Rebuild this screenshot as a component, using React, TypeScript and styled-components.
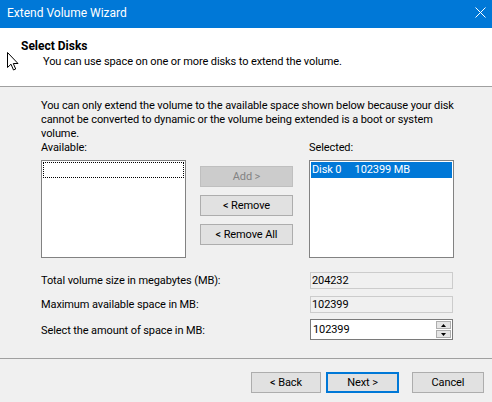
import styled, { createGlobalStyle } from 'styled-components';

const FONT = "Roboto, 'Liberation Sans', Arial, sans-serif";

const GlobalStyle = createGlobalStyle`
  html, body {
    margin: 0;
    padding: 0;
    background: #f0f0f0;
  }
  body {
    font-family: ${FONT};
    font-size: 11px;
    letter-spacing: -0.1px;
    color: #000;
  }
`;

const Window = styled.div`
  position: relative;
  width: 492px;
  height: 402px;
  display: flex;
  flex-direction: column;
  background: #f0f0f0;
  overflow: hidden;
`;

const TitleBar = styled.div`
  height: 28px;
  flex-shrink: 0;
  background: #0078d7;
  color: #fff;
  display: flex;
  align-items: center;
  justify-content: space-between;
  padding: 0 6px 2px 7px;
  box-sizing: border-box;
  font-size: 12px;
  letter-spacing: 0;
`;

const CloseIcon = styled.svg`
  width: 11px;
  height: 11px;
  margin-bottom: 1px;
`;

const Header = styled.div`
  height: 59px;
  flex-shrink: 0;
  background: #fff;
  border-bottom: 1px solid #a0a0a0;
  padding: 11px 0 0 21px;
  box-sizing: border-box;
`;

const HeaderTitle = styled.div`
  font-weight: bold;
  font-size: 12px;
  line-height: 14px;
  letter-spacing: 0;
`;

const HeaderSub = styled.div`
  margin: 2px 0 0 22px;
  line-height: 14px;
`;

const Body = styled.div`
  flex: 1;
  padding: 12px 30px 0 41px;
`;

const Para = styled.p`
  margin: 0;
  line-height: 14px;
  white-space: nowrap;
`;

const Lists = styled.div`
  display: flex;
  align-items: flex-start;
`;

const ListCol = styled.div<{ $left?: boolean }>`
  display: flex;
  flex-direction: column;
  width: 145px;
  margin-left: ${(p) => (p.$left ? '0' : '16px')};
`;

const Label = styled.div`
  line-height: 14px;
  margin-bottom: 5px;
`;

const ListBox = styled.div`
  height: 94px;
  border: 1px solid #828282;
  background: #fff;
  padding: 1px;
`;

const FocusRow = styled.div`
  height: 14px;
  border: 1px dotted #000;
`;

const SelRow = styled.div`
  height: 16px;
  line-height: 16px;
  background: #0078d7;
  color: #fff;
  padding-left: 1px;
  white-space: pre;
`;

const MidCol = styled.div`
  display: flex;
  flex-direction: column;
  gap: 8px;
  width: 93px;
  margin: 25px 0 0 14px;
`;

const Button = styled.button<{ $focus?: boolean; $w?: number; $gap?: number }>`
  height: 21px;
  width: ${(p) => (p.$w ? `${p.$w}px` : '100%')};
  margin-left: ${(p) => (p.$gap ? `${p.$gap}px` : '0')};
  box-sizing: border-box;
  font-family: ${FONT};
  font-size: 11px;
  letter-spacing: -0.1px;
  color: #000;
  background: #e1e1e1;
  border: ${(p) => (p.$focus ? '2px solid #0078d7' : '1px solid #adadad')};
  padding: 0;
  &:disabled {
    background: #cccccc;
    border-color: #bfbfbf;
    color: #838383;
  }
`;

const Fields = styled.div`
  display: grid;
  grid-template-columns: 269px 143px;
  row-gap: 7px;
  margin-top: 14px;
  align-items: center;
`;

const ReadOnly = styled.div`
  height: 17px;
  box-sizing: border-box;
  border: 1px solid #cccccc;
  background: #f0f0f0;
  line-height: 15px;
  padding-left: 1px;
`;

const Spin = styled.div`
  height: 21px;
  box-sizing: border-box;
  border: 1px solid #7a7a7a;
  background: #fff;
  display: flex;
  align-items: center;
  justify-content: space-between;
  padding-left: 2px;
  margin-top: -1px;
`;

const SpinButtons = styled.div`
  display: flex;
  flex-direction: column;
  gap: 1px;
  margin-right: 1px;
`;

const SpinBtn = styled.div`
  width: 15px;
  height: 8px;
  box-sizing: border-box;
  border: 1px solid #adadad;
  background: #e5e5e5;
  display: flex;
  align-items: center;
  justify-content: center;
`;

const Footer = styled.div`
  height: 44px;
  flex-shrink: 0;
  border-top: 1px solid #a0a0a0;
  display: flex;
  justify-content: flex-end;
  align-items: flex-start;
  padding: 13px 8px 0 0;
  box-sizing: border-box;
  gap: 5px;
`;

const Cursor = styled.svg`
  position: absolute;
  left: 7px;
  top: 52px;
  width: 12px;
  height: 19px;
`;

const Arrow = ({ down }: { down?: boolean }) => (
  <svg width="5" height="3" viewBox="0 0 5 3">
    <polygon points={down ? '0,0 5,0 2.5,3' : '0,3 5,3 2.5,0'} fill="#000" />
  </svg>
);

export default function App() {
  return (
    <>
      <GlobalStyle />
      <Window>
        <TitleBar>
          <span>Extend Volume Wizard</span>
          <CloseIcon viewBox="0 0 11 11">
            <path d="M0.5 0.5 L10.5 10.5 M10.5 0.5 L0.5 10.5" stroke="#fff" strokeWidth="1" />
          </CloseIcon>
        </TitleBar>
        <Header>
          <HeaderTitle>Select Disks</HeaderTitle>
          <HeaderSub>You can use space on one or more disks to extend the volume.</HeaderSub>
        </Header>
        <Body>
          <Para>
            You can only extend the volume to the available space shown below because your disk
            <br />
            cannot be converted to dynamic or the volume being extended is a boot or system
            <br />
            volume.
          </Para>
          <Lists>
            <ListCol $left>
              <Label>Available:</Label>
              <ListBox>
                <FocusRow />
              </ListBox>
            </ListCol>
            <MidCol>
              <Button disabled>Add &gt;</Button>
              <Button>&lt; Remove</Button>
              <Button>&lt; Remove All</Button>
            </MidCol>
            <ListCol>
              <Label>Selected:</Label>
              <ListBox>
                <SelRow>{'Disk 0     102399 MB'}</SelRow>
              </ListBox>
            </ListCol>
          </Lists>
          <Fields>
            <span>Total volume size in megabytes (MB):</span>
            <ReadOnly>204232</ReadOnly>
            <span>Maximum available space in MB:</span>
            <ReadOnly>102399</ReadOnly>
            <span>Select the amount of space in MB:</span>
            <Spin>
              <span>102399</span>
              <SpinButtons>
                <SpinBtn>
                  <Arrow />
                </SpinBtn>
                <SpinBtn>
                  <Arrow down />
                </SpinBtn>
              </SpinButtons>
            </Spin>
          </Fields>
        </Body>
        <Footer>
          <Button $w={70}>&lt; Back</Button>
          <Button $w={73} $focus>
            Next &gt;
          </Button>
          <Button $w={72} $gap={8}>
            Cancel
          </Button>
        </Footer>
        <Cursor viewBox="0 0 12 19">
          <path
            d="M0.5 0.5 L0.5 15.5 L4 12.2 L6.5 18 L8.7 17 L6.3 11.5 L11 11.5 Z"
            fill="#fff"
            stroke="#000"
            strokeWidth="1"
            strokeLinejoin="round"
          />
        </Cursor>
      </Window>
    </>
  );
}
